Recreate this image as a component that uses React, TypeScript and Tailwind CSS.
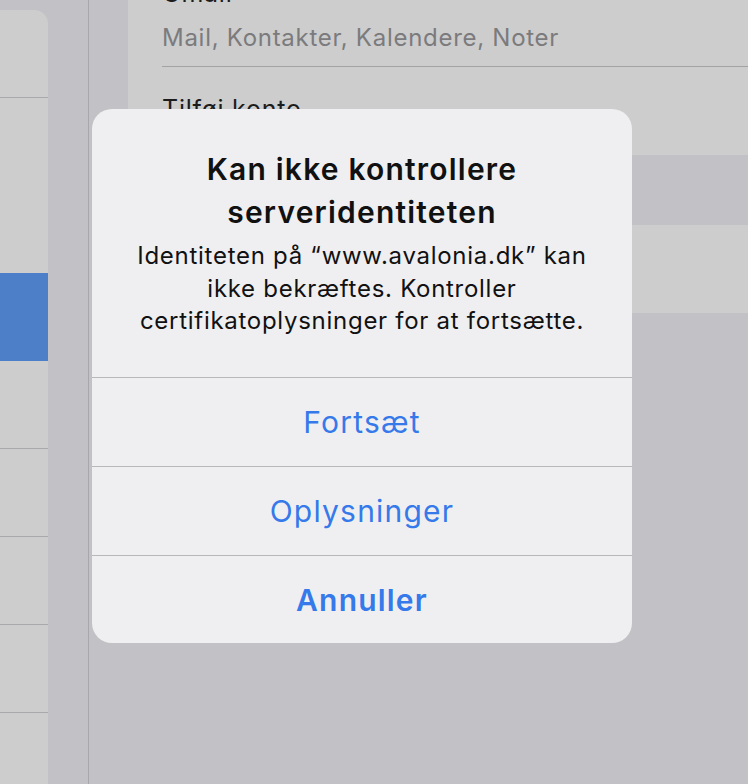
import React from "react";

const LEFT_ROWS = [
  { h: "h-[87px]", active: false },
  { h: "h-[87px]", active: false },
  { h: "h-[89px]", active: false, noLine: true },
  { h: "h-[88px]", active: true },
  { h: "h-[87px]", active: false },
  { h: "h-[88px]", active: false },
  { h: "h-[88px]", active: false },
  { h: "h-[88px]", active: false },
  { h: "h-[88px]", active: false },
];

const AlertButton: React.FC<{ label: string; bold?: boolean; last?: boolean }> = ({
  label,
  bold,
  last,
}) => (
  <button
    className={`flex w-full items-center justify-center border-t border-[#b8b8bb] text-[30px] leading-none tracking-[0.04em] text-[#3579ea] ${
      last ? "h-[88px]" : "h-[89px]"
    } ${bold ? "font-semibold" : "font-normal"}`}
  >
    {label}
  </button>
);

export default function App() {
  return (
    <div className="relative flex h-[784px] w-[748px] overflow-hidden bg-[#c2c1c6] font-['Inter','Liberation_Sans',sans-serif]">
      {/* sidebar list */}
      <div className="w-[48px] shrink-0 pt-[10px]">
        <div className="h-full overflow-hidden rounded-tr-[14px] bg-[#cdcdcd]">
          {LEFT_ROWS.map((row, i) => (
            <div
              key={i}
              className={`${row.h} ${row.active ? "bg-[#4d7fc9]" : ""} ${
                i > 0 && !row.noLine && !row.active && !LEFT_ROWS[i - 1].active
                  ? "border-t border-[#a9a9ab]"
                  : ""
              }`}
            />
          ))}
        </div>
      </div>

      <div className="w-[40px] shrink-0" />
      <div className="w-px shrink-0 bg-[#a8a8ac]" />
      <div className="w-[39px] shrink-0" />

      {/* detail pane */}
      <div className="flex flex-1 flex-col">
        <div className="h-[155px] bg-[#cdcdcd] pl-[34px]">
          <div className="-mt-[22px] text-[25px] leading-[30px] tracking-[0.03em] text-[#1c1c1c]">Gmail</div>
          <div className="mt-[16px] text-[24px] leading-[28px] tracking-[0.03em] text-[#7b7b7d]">
            Mail, Kontakter, Kalendere, Noter
          </div>
          <div className="mt-[14px] h-px bg-[#a3a3a5]" />
          <div className="mt-[27px] text-[25px] leading-[30px] tracking-[0.03em] text-[#1c1c1c]">Tilføj konto</div>
        </div>
        <div className="h-[70px]" />
        <div className="h-[88px] bg-[#cdcdcd]" />
      </div>

      {/* alert */}
      <div className="absolute left-[92px] top-[109px] flex w-[540px] flex-col overflow-hidden rounded-[20px] bg-[#efeff1]">
        <div className="flex h-[268px] flex-col items-center px-[20px] pt-[39px] text-center text-[#111]">
          <div className="text-[30px] font-semibold leading-[43px] tracking-[0.04em]">
            Kan ikke kontrollere
            <br />
            serveridentiteten
          </div>
          <div className="mt-[6px] text-[24px] leading-[32.5px] tracking-[0.03em]">
            Identiteten på “www.avalonia.dk” kan
            <br />
            ikke bekræftes. Kontroller
            <br />
            certifikatoplysninger for at fortsætte.
          </div>
        </div>
        <AlertButton label="Fortsæt" />
        <AlertButton label="Oplysninger" />
        <AlertButton label="Annuller" bold last />
      </div>
    </div>
  );
}
